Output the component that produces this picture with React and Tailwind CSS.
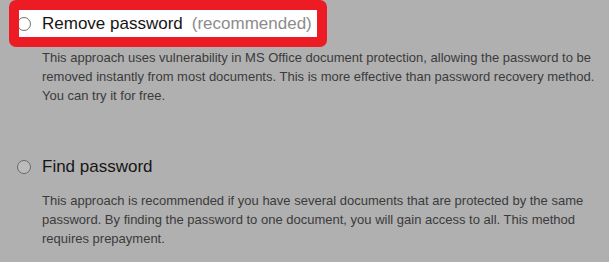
import React from 'react';

const options = [
  {
    title: 'Remove password',
    note: '(recommended)',
    text: 'This approach uses vulnerability in MS Office document protection, allowing the password to be removed instantly from most documents. This is more effective than password recovery method. You can try it for free.',
  },
  {
    title: 'Find password',
    text: 'This approach is recommended if you have several documents that are protected by the same password. By finding the password to one document, you will gain access to all. This method requires prepayment.',
  },
];

function Radio({ onWhite }) {
  return (
    <span
      className={`block w-[14px] h-[14px] rounded-full border shrink-0 ${
        onWhite ? 'border-[#707070] bg-white' : 'border-[#6a6a6a] bg-[#bcbcbc]'
      }`}
    />
  );
}

export default function App() {
  const [first, second] = options;
  return (
    <div className="w-[609px] h-[262px] bg-[#b0b0b0] overflow-hidden font-['Liberation_Sans',Arial,sans-serif]">
      {/* highlighted option */}
      <div className="ml-[9px] w-[318px] h-[47px] border-[10px] border-[#ed1c24] rounded-[7px] bg-white overflow-hidden flex items-center">
        <div className="-ml-[2px] mt-[1px]">
          <Radio onWhite />
        </div>
        <span className="ml-[11px] text-[17px] leading-[20px] text-[#161616]">{first.title}</span>
        <span className="ml-[9px] text-[17px] leading-[20px] text-[#8c8c8c]">{first.note}</span>
      </div>
      <p className="mt-[1px] ml-[42px] w-[556px] text-[13px] leading-[19px] text-[#3b3b3b]">{first.text}</p>

      <div className="mt-[52px] flex items-center">
        <div className="ml-[17px]">
          <Radio />
        </div>
        <span className="ml-[11px] text-[17px] leading-[20px] text-[#161616]">{second.title}</span>
      </div>
      <p className="mt-[14px] ml-[42px] w-[556px] text-[13px] leading-[19px] text-[#3b3b3b]">{second.text}</p>
    </div>
  );
}
